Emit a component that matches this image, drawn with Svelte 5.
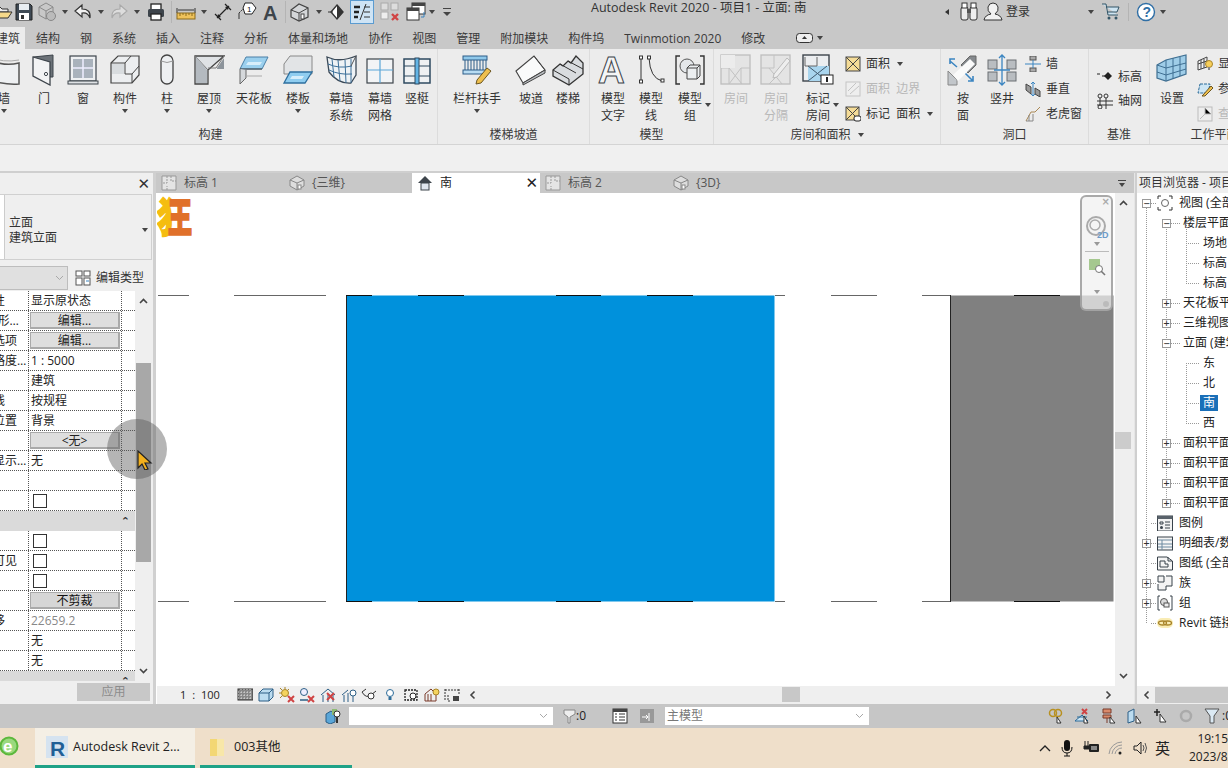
<script>
  const icons = {
    wall: '<path d="M1 5Q15 13 31 9V30Q16 31 1 26Z" fill="#eef0f2" stroke="#555" stroke-width="1.5"/><path d="M1 3Q15 9 31 6" stroke="#aaa" fill="none"/>',
    door: '<path d="M5 3 25 1V23H22" fill="#6c7278" stroke="#3d444b"/><path d="M5 3 22 8V31L5 22Z" fill="#f2f3f4" stroke="#3d444b" stroke-width="1.3"/><circle cx="18" cy="20" r="1.6" fill="#fff" stroke="#3d444b"/>',
    window: '<rect x="3" y="2" width="26" height="25" fill="#eef0f2" stroke="#3d444b" stroke-width="1.2"/><rect x="6" y="5" width="20" height="19" fill="#a9b2bc"/><path d="M16 5V24M6 14H26" stroke="#eef" stroke-width="1.5"/><rect x="1" y="27" width="30" height="3" fill="#dfe2e5" stroke="#3d444b"/>',
    component: '<path d="M2 9 9 2H30V21L23 29H2Z" fill="#eceef0" stroke="#444" stroke-width="1.2"/><path d="M2 9H16V20H23V29M16 9 22 2M23 20 30 12" fill="none" stroke="#444"/><path d="M3 10H15V20H3Z" fill="#d8dcdf"/>',
    column: '<rect x="10" y="1" width="12" height="29" rx="6" fill="#eef0f2" stroke="#444" stroke-width="1.3"/><path d="M10 7Q16 10 22 7" fill="none" stroke="#999"/>',
    roof: '<path d="M2 2H31L15 16V30H2Z" fill="#dfe2e5" stroke="#444" stroke-width="1.3"/><path d="M2 2 15 16M31 2 23 14H15" fill="none" stroke="#777"/><path d="M3 3 14 16V29H3Z" fill="#b4bac0"/><path d="M24 15H31V4L24 14Z" fill="#8d949b"/>',
    ceiling: '<path d="M8 3H30L24 15H2Z" fill="#9bd0ee" stroke="#4a7fa6"/><path d="M10 8H24L22 11H8Z" fill="#d8eefa"/><path d="M2 15H24" stroke="#444"/><path d="M2 15V30L8 24V16" fill="#d5d8db" stroke="#666"/><path d="M8 22H24" stroke="#aaa"/>',
    floor: '<path d="M8 2H30V20H2V10Z" fill="#e2e4e6" stroke="#888"/><path d="M8 18H30L23 29H2Z" fill="#8fcdf0" stroke="#2e6f9e" stroke-width="1.3"/><path d="M10 22H22L20 25H8Z" fill="#d6eefb"/>',
    cwsys: '<path d="M2 3Q15 9 31 2V21L26 29Q13 30 4 18Z" fill="#eef2f5" stroke="#3c4a58" stroke-width="1.3"/><path d="M7 5 9 23M13 6 15 27M20 6 21 29M26 5V29M3 10Q14 15 27 12M4 16Q14 21 27 20" stroke="#3b6f99" fill="none"/><path d="M26 12 31 2" stroke="#555"/>',
    cwgrid: '<rect x="3" y="5" width="26" height="24" fill="#f2f4f6" stroke="#3d444b" stroke-width="1.2"/><path d="M3 16H29M16 5V29" stroke="#5aa6d8" stroke-width="1.2"/>',
    mullion: '<rect x="3" y="5" width="26" height="24" fill="#eef1f3" stroke="#2e4a60" stroke-width="1.5"/><path d="M3 12H29M3 22H29" stroke="#2e4a60" stroke-width="1.2"/><rect x="14" y="4" width="4" height="26" fill="#63b5e6" stroke="#2e4a60"/>',
    railing: '<rect x="2" y="2" width="24" height="4" fill="#8fc8ea" stroke="#2c5d88"/><path d="M4 6V17M7 6V17M10 6V17M13 6V17M16 6V17M19 6V17M22 6V17M25 6V17" stroke="#2c5d88"/><rect x="2" y="16" width="24" height="4" fill="#b8dcf2" stroke="#2c5d88"/><path d="M16 26 26 14 30 17 20 29 15 30Z" fill="#eebf4e" stroke="#6b5620"/>',
    ramp: '<path d="M1 17 19 2 30 16 8 29Z" fill="#fafbfb" stroke="#444" stroke-width="1.1"/><path d="M8 29 30 16 30 19 8 31Z" fill="#b8bcc0" stroke="#444"/><path d="M19 2 30 16" stroke="#444"/>',
    stair: '<path d="M1 16 8 10 11 12 16 7 19 9 24 2 31 9V20L17 31 1 22Z" fill="#d9dcdf" stroke="#333" stroke-width="1.3"/><path d="M1 16 17 25M8 10 24 19M16 7 31 15M17 25V31" stroke="#333" fill="none"/>',
    modeltext: '<text x="1" y="29" font-family="Liberation Sans" font-weight="700" font-size="37" fill="#f4f5f6" stroke="#3d444b" stroke-width="1">A</text>',
    modelline: '<path d="M6 4V28" stroke="#333"/><path d="M14 4Q15 24 27 27" stroke="#333" fill="none"/><g fill="#fff" stroke="#333"><rect x="4.500" y="2" width="3" height="3"/><rect x="4.500" y="26" width="3" height="3"/><rect x="12.500" y="2" width="3" height="3"/><rect x="26" y="25" width="3" height="3"/></g>',
    modelgroup: '<path d="M6 2H2V30H6M26 2H30V30H26" fill="none" stroke="#333" stroke-width="1.4"/><circle cx="13" cy="12" r="7" fill="#e4e7ea" stroke="#555"/><path d="M13 14 16 11H26V22L23 25H13Z" fill="#eceff1" stroke="#444"/><path d="M13 14H23V25M23 14 26 11" fill="none" stroke="#444"/>',
    room: '<rect x="1" y="1" width="29" height="29" fill="#e4e4e4" stroke="#bdbdbd" stroke-width="1.3"/><path d="M1 14H9L22 30M30 14H21L9 30M9 14V30M21 14V30" fill="none" stroke="#c2c2c2"/><path d="M1 1H15V14H1Z" fill="#ececec"/>',
    roomsep: '<rect x="1" y="1" width="29" height="29" fill="#e4e4e4" stroke="#bdbdbd" stroke-width="1.3"/><path d="M14 1V14H1M9 14 22 30M21 18 9 30" fill="none" stroke="#c2c2c2"/><path d="M14 20 27 4 30 7 17 23 13 24Z" fill="#eee" stroke="#bbb"/>',
    tagroom: '<rect x="1" y="1" width="26" height="26" fill="#eceef0" stroke="#3d444b" stroke-width="1.4"/><path d="M6 12H27V27H6Z" fill="#a9d5ee"/><path d="M6 12 25 27M25 12 6 27" stroke="#40586c"/><path d="M3 3V12H15V3" fill="none" stroke="#666"/><rect x="19" y="21" width="12" height="9" fill="#fff" stroke="#222"/><rect x="24" y="23" width="2" height="5" fill="#222"/>',
    byface: '<path d="M1 17 10 26 V31H1Z" fill="#c2c6ca" stroke="#888"/><path d="M23 2H29V11L21 19 14 11Z" fill="#85898d" stroke="#666"/><path d="M3 7 10 13M3 10V5H8M26 27 18 19M26 22V27H21" stroke="#3b85c1" stroke-width="1.6" fill="none"/><path d="M6 21 23 5 28 10 11 27Z" fill="#fafafa"/>',
    shaft: '<g fill="#b9bdc1" stroke="#6a6e72"><rect x="2" y="6" width="9" height="9"/><rect x="21" y="6" width="9" height="9"/><rect x="2" y="18" width="9" height="9"/><rect x="21" y="18" width="9" height="9"/></g><path d="M16 1V31M13 4 16 1 19 4M13 28 16 31 19 28M8 16H24" stroke="#3b85c1" stroke-width="1.3" fill="none"/>',
    setwp: '<path d="M1 11 10 6 30 1V20L10 27 1 24Z" fill="#9fcde8" stroke="#3f6f92" stroke-width="1.2"/><path d="M10 6V27M1 11 10 14 30 9M1 18 10 21 30 15M17 4V25M24 3V22" fill="none" stroke="#3f6f92"/>',
    area: '<rect x="1" y="1" width="14" height="14" fill="#f5dc97" stroke="#444"/><path d="M1 1 15 15M15 1 1 15" stroke="#444"/>',
    areadis: '<rect x="1" y="1" width="14" height="14" fill="#eee" stroke="#c4c4c4"/><path d="M3 10 11 2M5 13 14 5" stroke="#c4c4c4"/>',
    tagarea: '<rect x="1" y="1" width="13" height="13" fill="#f5dc97" stroke="#444"/><path d="M1 1 14 14M14 1 1 14" stroke="#444"/><rect x="9" y="10" width="7" height="5" rx="2" fill="#fff" stroke="#222"/>',
    wallop: '<rect x="5" y="0" width="6" height="4" fill="#aaa" stroke="#555"/><rect x="5" y="12" width="6" height="4" fill="#aaa" stroke="#555"/><path d="M0 8H16M8 4V12" stroke="#3b85c1"/>',
    vert: '<path d="M1 3 6 6V13L1 9Z" fill="#999" stroke="#444"/><path d="M10 7 15 10V16L10 13Z" fill="#999" stroke="#444"/><path d="M8 1V15M6 3 8 1 10 3M6 13 8 15 10 13" stroke="#3b85c1" fill="none"/>',
    dormer: '<path d="M1 15 6 6H10L15 1" fill="none" stroke="#a85"/><path d="M4 15V9M1 15H8V8" fill="none" stroke="#888"/>',
    level: '<path d="M0 5H3M5 7H8" stroke="#222"/><path d="M11 3 15 7 11 11 7 7Z" fill="#222"/>',
    grid: '<circle cx="3" cy="3" r="2" fill="none" stroke="#333"/><circle cx="9" cy="3" r="2" fill="none" stroke="#333"/><circle cx="3" cy="14" r="2" fill="none" stroke="#333"/><path d="M3 5V12M9 5V16M0 8H16M0 12H16" stroke="#333"/>',
    showwp: '<path d="M1 5 10 1V11L1 14Z" fill="#f1f1f1" stroke="#444"/><path d="M4 4V13M7 3V12M1 8 10 5" stroke="#444"/><circle cx="12" cy="8" r="3.500" fill="#f7cf5a" stroke="#a8842a"/><rect x="11" y="11" width="2" height="3" fill="#888"/>',
    refplane: '<path d="M3 3H13L11 12H1Z" fill="#cde6f5" stroke="#2d6c9a" stroke-dasharray="3 1"/><path d="M6 14 14 5 16 7 8 15H5Z" fill="#eebf4e" stroke="#6b5620"/>',
    viewer: '<rect x="1" y="1" width="14" height="14" fill="#eee" stroke="#bbb"/><path d="M8 2V8H14M8 8 3 13" stroke="#bbb"/>',
    open: '<path d="M1 5H7L9 7H15V10H5L2 16H1Z" fill="#eee" stroke="#333"/><path d="M5 10H19L15 16H2Z" fill="#f6d98a" stroke="#333"/>',
    save: '<path d="M2 2H16L18 4V18H2Z" fill="#3f4a55" stroke="#222"/><rect x="5" y="2" width="10" height="6" fill="#e8edf1"/><rect x="5" y="11" width="10" height="7" fill="#fff"/><rect x="7" y="13" width="3" height="4" fill="#333"/>',
    sync: '<path d="M2 5 9 1 16 5V13L9 17 2 13Z" fill="#c8c8c8" stroke="#8a8a8a"/><path d="M2 5 9 9 16 5M9 9V17" stroke="#8a8a8a" fill="none"/><circle cx="14" cy="14" r="4.500" fill="#bbb" stroke="#888"/>',
    undo: '<path d="M9 3 2 9 9 15V11Q15 10 17 16 18 7 9 7Z" fill="#f1f1f1" stroke="#333" stroke-width="1.2"/>',
    redo: '<path d="M11 3 18 9 11 15V11Q5 10 3 16 2 7 11 7Z" fill="#ddd" stroke="#aaa" stroke-width="1.1"/>',
    print: '<rect x="5" y="2" width="10" height="6" fill="#fff" stroke="#222" stroke-width="1.3"/><rect x="2" y="7" width="16" height="8" rx="1.500" fill="#3d444b"/><rect x="5" y="12" width="10" height="6" fill="#fff" stroke="#222" stroke-width="1.3"/>',
    measure: '<path d="M1 6V11M19 6V11M2 8H18" stroke="#333"/><rect x="1" y="11" width="18" height="6" fill="#eec25b" stroke="#8a6a1c"/><path d="M4 11V14M7 11V13M10 11V14M13 11V13M16 11V14" stroke="#8a6a1c"/>',
    aligned: '<path d="M4 16 16 4M2 12 8 18M12 2 18 8" stroke="#222" stroke-width="1.2" fill="none"/><path d="M4 16 5 12 8 15ZM16 4 12 5 15 8Z" fill="#222"/>',
    tagq: '<path d="M2 17V11" stroke="#333"/><path d="M2 11 8 5" stroke="#333" stroke-dasharray="2 1"/><path d="M8 1H15L19 6 15 12H8L6 6Z" fill="#fff" stroke="#222"/><text x="10" y="10" font-size="8" font-family="Liberation Sans" fill="#111">1</text>',
    big_a: '<text x="2" y="18" font-family="Liberation Sans" font-weight="700" font-size="20" fill="#3d444b">A</text>',
    house: '<path d="M1 8 9 2 18 6V15L9 19 1 15Z" fill="#d4d6d8" stroke="#444" stroke-width="1.2"/><path d="M1 8 9 11 18 6M9 11V19" stroke="#444" fill="none"/><rect x="11" y="12" width="3" height="5" fill="#fff" stroke="#444"/>',
    section: '<path d="M10 3 16 10 10 17 4 10Z" fill="#fff" stroke="#333" stroke-width="1.4"/><path d="M10 3 16 10 10 17Z" fill="#333"/><path d="M1 10H6" stroke="#333"/>',
    thin: '<rect x="0.500" y="0.500" width="23" height="23" fill="#cfe4f5" stroke="#5b9bd0"/><path d="M4 7H10M4 12H9M4 17H8" stroke="#222" stroke-width="2.400"/><path d="M14 7H20M14 12H20M14 17H20M16 4 10 20" stroke="#333"/>',
    closeh: '<rect x="1" y="1" width="7" height="7" fill="#ddd" stroke="#aaa"/><rect x="11" y="1" width="7" height="7" fill="#ddd" stroke="#aaa"/><rect x="1" y="10" width="7" height="7" fill="#eee" stroke="#aaa"/><path d="M12 12 18 18M18 12 12 18" stroke="#d04444" stroke-width="2.400"/>',
    switchw: '<rect x="6" y="1" width="13" height="11" fill="#fff" stroke="#333"/><rect x="6" y="1" width="13" height="3" fill="#444"/><rect x="1" y="6" width="12" height="12" fill="#fff" stroke="#333"/><rect x="1" y="6" width="12" height="3" fill="#444"/><path d="M15 15H18V10" fill="none" stroke="#3b85c1"/>',
    bino: '<rect x="2" y="5" width="7" height="13" rx="2" fill="#eee" stroke="#333"/><rect x="11" y="5" width="7" height="13" rx="2" fill="#eee" stroke="#333"/><rect x="3" y="1" width="5" height="5" fill="#fff" stroke="#333"/><rect x="12" y="1" width="5" height="5" fill="#fff" stroke="#333"/><rect x="8" y="7" width="4" height="4" fill="#555"/>',
    user: '<path d="M1 18Q2 13 8 12 4 9 5 5 6 1 10 1 14 1 15 5 16 9 12 12 18 13 19 18Z" fill="#f2f2f2" stroke="#333"/>',
    cart: '<path d="M1 2H5L7 13H17M5 5H18L16 10H6" fill="#cfe5f2" stroke="#356"/><circle cx="8" cy="16" r="1.500" fill="#356"/><circle cx="15" cy="16" r="1.500" fill="#356"/>',
    help: '<circle cx="10" cy="10" r="8.500" fill="#fff" stroke="#2f6ea5" stroke-width="1.400"/><text x="6.500" y="15" font-size="14" font-weight="700" font-family="Liberation Sans" fill="#2f6ea5">?</text>',
    plan: '<path d="M1 1H15V15H1Z" fill="#e4e4e4" stroke="#999"/><path d="M10 1V6H15M6 1V8H1M6 15V11" stroke="#999" fill="none" stroke-dasharray="2 1"/>',
    view3d: '<path d="M1 5 8 1 15 5V11L8 15 1 11Z" fill="#ddd" stroke="#888"/><path d="M1 5 8 8 15 5M8 8V15" stroke="#888" fill="none"/><rect x="9" y="10" width="3" height="4" fill="#fff" stroke="#888"/>',
    elev: '<path d="M8 1 15 8H1Z" fill="#3d444b"/><rect x="4" y="8" width="8" height="7" fill="#dfe6ee" stroke="#3d444b"/>',
    editType: '<rect x="1" y="1" width="6" height="5" fill="#fff" stroke="#555"/><rect x="1" y="8" width="6" height="7" fill="#fff" stroke="#555"/><rect x="9" y="1" width="6" height="5" fill="#fff" stroke="#555"/><rect x="9" y="8" width="6" height="7" fill="#fff" stroke="#555"/><path d="M11 11H14" stroke="#3b85c1"/>',
    treeviews: '<path d="M1 4V1H4M12 1H15V4M1 12V15H4M12 15H15V12" fill="none" stroke="#333"/><circle cx="8" cy="8" r="3.500" fill="#fff" stroke="#666"/>',
    legend: '<rect x="0.500" y="1" width="15" height="15" fill="#f1f1f1" stroke="#39424b"/><rect x="0.500" y="1" width="15" height="3" fill="#59626b"/><path d="M3 7H6V9H3ZM8 7H13M8 10H13M8 13H13" stroke="#39424b" fill="none"/><circle cx="4.500" cy="12.500" r="1.500" fill="#39424b"/>',
    sched: '<rect x="0.500" y="2" width="15" height="13" fill="#f4f4f4" stroke="#39424b"/><path d="M1 5H15M1 9H15M1 12H15M5 5V15" stroke="#6d8aa0"/>',
    sheet: '<path d="M0.500 2H10L15.500 6V15H0.500Z" fill="#f4f4f4" stroke="#39424b"/><path d="M3 12V6H8V9H11V12ZM11 2V6H15" fill="none" stroke="#39424b"/>',
    family: '<path d="M1 1H7V7H1ZM9 1H15V11H9V15H1V9" fill="#f4f4f4" stroke="#39424b"/>',
    group: '<path d="M3 1H1V15H3M13 1H15V15H13" fill="none" stroke="#39424b"/><circle cx="7" cy="7" r="3.500" fill="#ddd" stroke="#555"/><rect x="7" y="8" width="5" height="4" fill="#eee" stroke="#555"/>',
    link: '<rect x="0" y="3" width="16" height="10" rx="5" fill="#f9ecb4"/><ellipse cx="5.500" cy="8" rx="4" ry="2" fill="none" stroke="#a8842a" stroke-width="1.300"/><ellipse cx="10.500" cy="8" rx="4" ry="2" fill="none" stroke="#a8842a" stroke-width="1.300"/>',
    vDetail: '<rect x="1" y="2" width="15" height="11" fill="#888" stroke="#333"/><path d="M1 5H16M1 8H16M1 11H16M4 2V13M7 2V13M10 2V13M13 2V13" stroke="#ddd" stroke-dasharray="1 2"/>',
    vCube: '<path d="M1 6 5 2H15V10L11 14H1Z" fill="#bcdcf0" stroke="#2d5f86"/><path d="M1 6H11V14M11 6 15 2" fill="none" stroke="#2d5f86"/>',
    vSun: '<circle cx="6" cy="6" r="3.500" fill="#f4d35e" stroke="#a8842a"/><path d="M6 0V2M0 6H2M1 1 3 3M10 2 8.500 3.500M1 11 3 9" stroke="#a8842a"/><path d="M9 9 15 15M15 9 9 15" stroke="#d04444" stroke-width="2"/>',
    vShadow: '<circle cx="5" cy="5" r="3.500" fill="#eef" stroke="#2d5f86"/><path d="M1 13H9" stroke="#2d5f86" stroke-width="1.500"/><path d="M9 9 15 15M15 9 9 15" stroke="#d04444" stroke-width="2"/>',
    vRender: '<path d="M1 8 8 2 15 8M3 8V15M8 8V15M13 8V15" stroke="#2d5f86" fill="none"/><path d="M7 6 14 13M14 6 7 13" stroke="#d04444" stroke-width="2"/>',
    vCrop: '<path d="M1 8 7 3M3 8V15M7 6V15" stroke="#2d5f86" fill="none"/><circle cx="12" cy="6" r="3" fill="#fff" stroke="#2d5f86"/><path d="M12 9V15" stroke="#2d5f86"/>',
    vGlass: '<path d="M1 5Q5 12 10 8L15 4M1 5 5 2" fill="none" stroke="#333"/><circle cx="10" cy="9" r="3" fill="#fff" stroke="#333"/>',
    vBulb: '<circle cx="8" cy="6" r="3.500" fill="#fff" stroke="#2d6c9a"/><path d="M6.500 10H9.500V13H6.500Z" fill="#2d6c9a"/>',
    vHide: '<path d="M2 3H14V13H2Z" fill="none" stroke="#222" stroke-dasharray="2 1" stroke-width="1.300"/><circle cx="10" cy="9" r="3" fill="#fff" stroke="#222"/>',
    vTemp: '<path d="M1 7 7 2 12 7V14H1ZM4 7V14M7 7V14" fill="none" stroke="#7a3a2a"/><circle cx="12" cy="5" r="3" fill="#f4d35e" stroke="#a8842a"/>',
    vAnal: '<path d="M1 2V14M1 3H15M15 2V7M4 8V14H7" fill="none" stroke="#333" stroke-dasharray="2 1"/><rect x="9" y="9" width="6" height="5" fill="#444"/>',
    stWs: '<path d="M1 6 6 3 10 6V14L5 16 1 14Z" fill="#5aa6d8" stroke="#2d5f86"/><rect x="7" y="1" width="5" height="6" fill="#8dbb73"/><path d="M12 7V15" stroke="#333" stroke-width="2"/><circle cx="12" cy="6" r="3" fill="#fff" stroke="#333"/>',
    stFilter: '<path d="M2 2H13V6L8 9V15H6V9L2 6Z" fill="#eee" stroke="#888"/>',
    stList: '<rect x="1" y="1" width="14" height="14" fill="#fff" stroke="#333"/><rect x="1" y="1" width="14" height="3" fill="#444"/><path d="M3 6H5M7 6H13M3 9H5M7 9H13M3 12H5M7 12H13" stroke="#333"/>',
    stOpt: '<rect x="1" y="1" width="14" height="14" fill="#999"/><path d="M3 9H9M7 7 9 9 7 11M10 5V13" stroke="#fff" fill="none"/>',
    stLink: '<circle cx="5" cy="5" r="3.500" fill="none" stroke="#b89020" stroke-width="1.500"/><circle cx="10" cy="5" r="3.500" fill="none" stroke="#b89020" stroke-width="1.500"/><path d="M9 9 13 15H9Z" fill="#fff" stroke="#333"/>',
    stUnder: '<path d="M1 13 8 7 14 13ZM3 9H13" fill="#cde6f5" stroke="#2d6c9a"/><path d="M8 1 13 6M13 1 8 6" stroke="#d04444" stroke-width="2"/><path d="M10 8 14 15H10Z" fill="#fff" stroke="#333"/>',
    stPin: '<path d="M3 1H11V5H3ZM3 7H11V10H3ZM7 10V15" fill="#d98a6a" stroke="#7a3a2a"/><path d="M10 9 15 15H10Z" fill="#fff" stroke="#333"/>',
    stFace: '<path d="M2 4 8 1V13L2 15Z" fill="#bcdcf0" stroke="#2d5f86"/><path d="M10 8 15 15H10Z" fill="#fff" stroke="#333"/>',
    stDrag: '<path d="M5 1V8M2 4H8" stroke="#222" stroke-width="1.500"/><path d="M8 6 14 14H8Z" fill="#fff" stroke="#333"/>',
    stGear: '<circle cx="8" cy="8" r="5" fill="none" stroke="#aaa" stroke-width="2.500"/>',
    stFunnel: '<path d="M1 1H15L10 8V15H6V8Z" fill="#dbe9f3" stroke="#555"/>',
    ie: '<circle cx="10" cy="10" r="8.500" fill="#9ad97e" stroke="#5cb83c" stroke-width="2"/><text x="4" y="16" font-size="17" font-weight="700" font-family="Liberation Sans" fill="#fff">e</text>',
    revit: '<rect x="0" y="0" width="22" height="22" fill="#d5e3f0"/><text x="4" y="20" font-size="21" font-weight="700" font-family="Liberation Sans" fill="#1f5f96">R</text>',
    folder: '<path d="M0 1H9L14 2V18H0Z" fill="#f3d774"/><path d="M7 1H14V18H7Z" fill="#f8e7a8"/>',
    mic: '<rect x="4" y="1" width="6" height="11" rx="3" fill="#111"/><path d="M2 8Q2 14 7 14 12 14 12 8M7 14V17M4 17H10" fill="none" stroke="#111"/>',
    power: '<path d="M2 1V6M5 1V6M1 6H6V9H1Z" stroke="#222" fill="#222"/><rect x="6" y="4" width="10" height="8" fill="#222" rx="1"/><rect x="8" y="6" width="6" height="4" fill="#888"/>',
    wifi: '<path d="M1 14A13 13 0 0 1 14 2M4 14A10 10 0 0 1 14 5M7 14A7 7 0 0 1 14 8" fill="none" stroke="#999"/><circle cx="12" cy="13" r="1.500" fill="#222"/>',
    sound: '<path d="M1 6H4L8 2V14L4 10H1Z" fill="none" stroke="#222"/><path d="M10 5Q12 8 10 11M12 3Q15 8 12 13" fill="none" stroke="#555"/>',
    cursor: '<path d="M1 1 1 18 5 14 8 20 11 19 8 13 14 13Z" fill="#f2b01e" stroke="#222" stroke-width="1.200"/>'
  };

  const qat = [
    ['open', 20], ['save', 22], ['sync', 24], ['a', 12], ['undo', 24], ['a', 12], ['redo', 24], ['a', 12],
    ['print', 26], ['s', 4], ['measure', 25], ['a', 12], ['aligned', 25], ['tagq', 24], ['big_a', 24], ['s', 4],
    ['house', 26], ['a', 12], ['section', 24], ['thin', 26], ['closeh', 30], ['switchw', 22], ['a', 10], ['c', 20]
  ];

  const tabs = ['建筑', '结构', '钢', '系统', '插入', '注释', '分析', '体量和场地', '协作', '视图', '管理', '附加模块', '构件坞', 'Twinmotion 2020', '修改'];

  const panels = [
    { title: '构建', w: 454, items: [
      { i: 'wall', l: ['墙'], w: 40, a: 1 }, { i: 'door', l: ['门'], w: 40 }, { i: 'window', l: ['窗'], w: 38 },
      { i: 'component', l: ['构件'], w: 46, a: 1 }, { i: 'column', l: ['柱'], w: 38, a: 1 }, { i: 'roof', l: ['屋顶'], w: 46, a: 1 },
      { i: 'ceiling', l: ['天花板'], w: 44 }, { i: 'floor', l: ['楼板'], w: 44, a: 1 }, { i: 'cwsys', l: ['幕墙', '系统'], w: 42 },
      { i: 'cwgrid', l: ['幕墙', '网格'], w: 36 }, { i: 'mullion', l: ['竖梃'], w: 38 } ] },
    { title: '楼梯坡道', w: 152, items: [
      { i: 'railing', l: ['栏杆扶手'], w: 78, a: 1 }, { i: 'ramp', l: ['坡道'], w: 30 }, { i: 'stair', l: ['楼梯'], w: 44 } ] },
    { title: '模型', w: 124, items: [
      { i: 'modeltext', l: ['模型', '文字'], w: 46 }, { i: 'modelline', l: ['模型', '线'], w: 30 }, { i: 'modelgroup', l: ['模型', '组'], w: 48, side: 1 } ] },
    { title: '房间和面积', more: 1, w: 227, items: [
      { i: 'room', l: ['房间'], w: 44, dis: 1 }, { i: 'roomsep', l: ['房间', '分隔'], w: 36, dis: 1 }, { i: 'tagroom', l: ['标记', '房间'], w: 48, side: 1 } ],
      small: { w: 99, pl: 3, rows: [ { i: 'area', t: '面积', a: 1 }, { i: 'areadis', t: '面积  边界', dis: 1 }, { i: 'tagarea', t: '标记  面积', a: 1 } ] } },
    { title: '洞口', w: 148, items: [ { i: 'byface', l: ['按', '面'], w: 44 }, { i: 'shaft', l: ['竖井'], w: 34 } ],
      small: { w: 70, pl: 6, rows: [ { i: 'wallop', t: '墙' }, { i: 'vert', t: '垂直' }, { i: 'dormer', t: '老虎窗' } ] } },
    { title: '基准', w: 61, items: [],
      small: { w: 61, pl: 8, tight: 1, rows: [ { i: 'level', t: '标高' }, { i: 'grid', t: '轴网' } ] } },
    { title: '工作平面', w: 130, items: [ { i: 'setwp', l: ['设置'], w: 44 } ],
      small: { w: 86, pl: 3, rows: [ { i: 'showwp', t: '显示' }, { i: 'refplane', t: '参照' }, { i: 'viewer', t: '查看器', dis: 1 } ] } }
  ];

  const docTabs = [
    { i: 'plan', t: '标高 1' }, { i: 'view3d', t: '{三维}' }, { i: 'elev', t: '南', on: 1 },
    { i: 'plan', t: '标高 2' }, { i: 'view3d', t: '{3D}' }
  ];

  const props = [
    ['零件可见性', '显示原状态'], ['可见性/图形替换', '编辑...', 'btn'], ['图形显示选项', '编辑...', 'btn'],
    ['当比例粗略度超过下列值时', '1 : 5000'], ['规程', '建筑'], ['显示隐藏线', '按规程'], ['颜色方案位置', '背景'],
    ['颜色方案', '<无>', 'btn'], ['默认分析显示样式', '无'], ['参照', ''], ['日光路径', '', 'chk'],
    ['范围', '', 'head'], ['裁剪视图', '', 'chk'], ['裁剪区域可见', '', 'chk'], ['注释裁剪', '', 'chk'],
    ['远剪裁', '不剪裁', 'btn dark'], ['远剪裁偏移', '22659.2', 'grey'], ['范围框', '无'], ['相关标高', '无'], ['标识数据', '', 'head']
  ];

  const tree = [
    { l: 0, b: '-', i: 'treeviews', t: '视图 (全部)' }, { l: 1, b: '-', t: '楼层平面' }, { l: 2, t: '场地' }, { l: 2, t: '标高 1' }, { l: 2, t: '标高 2' },
    { l: 1, b: '+', t: '天花板平面' }, { l: 1, b: '+', t: '三维视图' }, { l: 1, b: '-', t: '立面 (建筑立面)' },
    { l: 2, t: '东' }, { l: 2, t: '北' }, { l: 2, t: '南', on: 1 }, { l: 2, t: '西' },
    { l: 1, b: '+', t: '面积平面 (人防)' }, { l: 1, b: '+', t: '面积平面 (净面积)' }, { l: 1, b: '+', t: '面积平面 (总建筑)' }, { l: 1, b: '+', t: '面积平面 (防火)' },
    { l: 0, i: 'legend', t: '图例' }, { l: 0, b: '+', i: 'sched', t: '明细表/数量 (全部)' }, { l: 0, i: 'sheet', t: '图纸 (全部)' },
    { l: 0, b: '+', i: 'family', t: '族' }, { l: 0, b: '+', i: 'group', t: '组' }, { l: 0, i: 'link', t: 'Revit 链接' }
  ];

  // connector stubs of the project tree, one per row: [from x, to x]
  const stubs = [[14, 19], [34, 44], [49, 62]];

  const viewIcons = ['vDetail', 'vCube', 'vSun', 'vShadow', 'vRender', 'vCrop', 'vGlass', 'vBulb', 'vHide', 'vTemp', 'vAnal'];
  const selectIcons = ['stLink', 'stUnder', 'stPin', 'stFace', 'stDrag', 'stGear', 'stFunnel'];

  // elevation outline: [x1, x2] with canvas origin at 157,193
  const thinLines = [[1, 32], [77, 169], [618, 628], [674, 720], [765, 793]];
  const darkLines = [[189, 215], [261, 307], [399, 444], [490, 536], [857, 903]];
</script>

{#snippet ico(name, s, h = s)}
  <svg class="ico" width={s} height={h} viewBox="0 0 {s} {h}">{@html icons[name]}</svg>
{/snippet}

{#snippet chev(dir = 'down')}
  <svg class="chev {dir}" width="9" height="6" viewBox="0 0 9 6"><path d="M1 1 4.500 4.500 8 1" fill="none" stroke="#444" stroke-width="1.600"/></svg>
{/snippet}

<div class="app">
  <header class="top">
    <div class="qrow">
      <div class="qat">
        {#each qat as [n, w]}
          <span class="qslot" style="width:{w}px">
            {#if n === 'a'}<i class="tri"></i>
            {:else if n === 's'}<i class="qsep"></i>
            {:else if n === 'c'}<span class="cust"><i class="tri wide"></i></span>
            {:else if n === 'thin'}{@render ico(n, 24)}
            {:else}{@render ico(n, 20)}{/if}
          </span>
        {/each}
      </div>
      <div class="title">Autodesk Revit 2020 - 项目1 - 立面: 南</div>
      <div class="account">
        <i class="tri left"></i>
        {@render ico('bino', 20)}
        {@render ico('user', 20)}
        <span class="login">登录</span>
        <i class="tri acc-arrow"></i>
        {@render ico('cart', 20)}
        <i class="qsep"></i>
        {@render ico('help', 20)}
        <i class="tri"></i>
      </div>
    </div>
    <nav class="tabs">
      {#each tabs as t, i}
        <span class="tab" class:on={i === 0}>{t}</span>
      {/each}
      <span class="tabmode"><svg width="17" height="10" viewBox="0 0 17 10"><rect x="0.500" y="0.500" width="16" height="9" rx="3" fill="#eee" stroke="#333"/><path d="M6 6H11L8.500 3Z" fill="#333"/></svg><i class="tri"></i></span>
    </nav>
  </header>

  <section class="ribbon">
    {#each panels as p}
      <div class="panel" style="width:{p.w}px">
        <div class="pbody">
          {#each p.items as b}
            <div class="big" class:dis={b.dis} class:side={b.side} style="width:{b.w}px">
              {@render ico(b.i, 32)}
              <div class="lbl">
                {#each b.l as line}<div>{line}</div>{/each}
              </div>
              {#if b.a}<i class="tri"></i>{/if}
              {#if b.side}<i class="tri sidetri"></i>{/if}
            </div>
          {/each}
          {#if p.small}
            <div class="smallcol" class:tight={p.small.tight} style="width:{p.small.w}px;padding-left:{p.small.pl}px">
              {#each p.small.rows as r}
                <div class="srow" class:dis={r.dis}>
                  {@render ico(r.i, 16)}
                  <span>{r.t}</span>
                  {#if r.a}<i class="tri"></i>{/if}
                </div>
              {/each}
            </div>
          {/if}
        </div>
        <div class="ptitle">{p.title}{#if p.more}<i class="tri more"></i>{/if}</div>
      </div>
    {/each}
  </section>

  <div class="band"></div>

  <main class="main">
    <aside class="props">
      <div class="phead"><span class="x">✕</span></div>
      <div class="selector">
        <div class="thumb"></div>
        <div class="seltext"><div>立面</div><div>建筑立面</div></div>
        <i class="tri"></i>
      </div>
      <div class="typerow">
        <div class="typesel">{@render chev()}</div>
        {@render ico('editType', 16)}
        <span>编辑类型</span>
      </div>
      <div class="pscroll">
        <div class="ptable">
          {#each props as [k, v, kind]}
            {#if kind === 'head'}
              <div class="phdr"><span>{k}</span><b>⌃</b></div>
            {:else}
              <div class="prow">
                <div class="pk">{k}</div>
                <div class="pv {kind || ''}">
                  {#if kind === 'chk'}<i class="box"></i>
                  {:else if kind && kind.startsWith('btn')}<span class="pbtn" class:dark={kind.includes('dark')}>{v}</span>
                  {:else}{v}{/if}
                </div>
                <div class="pe"></div>
              </div>
            {/if}
          {/each}
        </div>
        <div class="pbar">
          <span class="arrow">{@render chev('up')}</span>
          <div class="ptrack"><div class="pthumb"></div></div>
          <span class="arrow">{@render chev()}</span>
        </div>
      </div>
      <div class="applyrow"><span class="apply">应用</span></div>
    </aside>
    <div class="split"></div>

    <div class="viewarea">
      <div class="doctabs">
        {#each docTabs as d}
          <div class="dtab" class:on={d.on}>
            {@render ico(d.i, 16)}
            <span>{d.t}</span>
            {#if d.on}<b class="dx">✕</b>{/if}
          </div>
        {/each}
        <span class="dmenu"><i class="bar"></i><i class="tri"></i></span>
      </div>
      <div class="viewmid">
        <div class="canvas">
          <svg class="drawing" width="958" height="492" viewBox="0 0 958 492">
            <rect x="189.500" y="102.500" width="428" height="306" fill="#0091dc"/>
            <rect x="793.500" y="102.500" width="163" height="306" fill="#808080"/>
            <path d="M189.500 102V409M793.500 102V409" stroke="#222"/>
            {#each [102.5, 408.5] as y}
              {#each thinLines as [a, b]}<line x1={a} x2={b} y1={y} y2={y} stroke="#666"/>{/each}
              {#each darkLines as [a, b]}<line x1={a} x2={b} y1={y} y2={y} stroke="#111"/>{/each}
            {/each}
          </svg>
          <div class="logo"><span class="lg-a">犭</span><span class="lg-b">王</span></div>
          <div class="navbar">
            <span class="navclose">×</span>
            <svg width="26" height="26" viewBox="0 0 26 26"><circle cx="12" cy="12" r="9" fill="#f4f4f4" stroke="#aaa" stroke-width="2"/><circle cx="11" cy="11" r="5" fill="none" stroke="#aaa" stroke-width="1.500"/><text x="13" y="24" font-size="9" font-weight="700" font-family="Liberation Sans" fill="#6c9bc8">2D</text></svg>
            <i class="tri grey"></i>
            <i class="navline"></i>
            <svg width="18" height="18" viewBox="0 0 18 18"><rect x="1" y="1" width="11" height="11" fill="#a5c88f"/><circle cx="11" cy="11" r="3.500" fill="#fff" stroke="#777"/><path d="M13 13 17 17" stroke="#777" stroke-width="1.600"/></svg>
            <i class="tri grey"></i>
            <span class="navgear"></span>
          </div>
        </div>
        <div class="vscroll">
          <span class="arrow">{@render chev('up')}</span>
          <div class="vtrack"><div class="vthumb"></div></div>
          <span class="arrow">{@render chev()}</span>
        </div>
      </div>
      <div class="viewbar">
        <span class="scale">1 : 100</span>
        <div class="vicons">
          {#each viewIcons as n}<span class="vi">{@render ico(n, 16)}</span>{/each}
          <span class="vi">{@render chev('left')}</span>
        </div>
        <div class="htrack"><div class="hthumb"></div></div>
        <span class="harrow">{@render chev('right')}</span>
        <span class="grip"></span>
      </div>
    </div>
    <div class="split right"></div>

    <aside class="browser">
      <div class="bhead">项目浏览器 - 项目1</div>
      <div class="tree">
        <svg class="guides" width="91" height="440" viewBox="0 0 91 440">
          <path d="M9.500 15V430M29.500 30V310M49.500 30V90M49.500 170V230" stroke="#999" stroke-dasharray="1 1" fill="none"/>
          {#each tree as r, i}
            <line x1={stubs[r.l][0]} x2={stubs[r.l][1]} y1={10.5 + i * 20} y2={10.5 + i * 20} stroke="#999" stroke-dasharray="1 1"/>
          {/each}
        </svg>
        {#each tree as r}
          <div class="trow lv{r.l}">
            {#if r.b}<span class="tbox">{r.b === '+' ? '+' : '−'}</span>{:else if r.l < 2}<span class="tbox none"></span>{/if}
            {#if r.i}<span class="ticon">{@render ico(r.i, 16)}</span>{/if}
            <span class="ttext" class:sel={r.on}>{r.t}</span>
          </div>
        {/each}
      </div>
      <div class="bscroll">
        <span class="harrow">{@render chev('left')}</span>
        <div class="bthumb"></div>
      </div>
    </aside>
  </main>

  <div class="status">
    <span class="st-ws">{@render ico('stWs', 16)}</span>
    <div class="combo">{@render chev()}</div>
    <span class="st-f">{@render ico('stFilter', 16)}</span>
    <span class="st-n">:0</span>
    <span class="st-l">{@render ico('stList', 16)}</span>
    <span class="st-o">{@render ico('stOpt', 16)}</span>
    <div class="combo model"><span>主模型</span>{@render chev()}</div>
    <div class="st-right">
      {#each selectIcons as n}{@render ico(n, 16)}{/each}
      <span class="st-z">:0</span>
    </div>
  </div>

  <footer class="taskbar">
    <span class="ie">{@render ico('ie', 20)}</span>
    <div class="task active">{@render ico('revit', 22)}<span>Autodesk Revit 2...</span></div>
    <div class="task folder">{@render ico('folder', 14, 18)}<span>003其他</span></div>
    <div class="tray">
      <svg width="12" height="8" viewBox="0 0 12 8"><path d="M1 7 6 2 11 7" fill="none" stroke="#222" stroke-width="1.300"/></svg>
      {@render ico('mic', 14, 18)}
      {@render ico('power', 16)}
      {@render ico('wifi', 16)}
      {@render ico('sound', 16)}
      <span class="ime">英</span>
      <div class="clock"><div>19:15</div><div>2023/8/15</div></div>
    </div>
  </footer>

  <div class="spot"></div>
  <span class="mouse">{@render ico('cursor', 20)}</span>
</div>

<style>
  :global(body) {
    margin: 0;
    overflow: hidden;
  }

  .app {
    position: relative;
    width: 1228px;
    height: 768px;
    overflow: hidden;
    display: flex;
    flex-direction: column;
    background: #efefef;
    color: #333;
    font: 12px/1.2 "Open Sans", "Noto Sans CJK SC", sans-serif;
  }

  .ico {
    display: block;
    flex-shrink: 0;
  }

  .tri {
    display: block;
    width: 0;
    height: 0;
    border: 3px solid transparent;
    border-top: 4px solid #444;
    border-bottom: 0;
    flex-shrink: 0;
  }

  .tri.wide {
    border-left-width: 4px;
    border-right-width: 4px;
  }

  .tri.grey {
    border-top-color: #999;
  }

  /* title bar + ribbon tabs */
  .top {
    height: 49px;
    flex-shrink: 0;
    background: #c8c8c8;
  }

  .qrow {
    height: 27px;
    display: flex;
    align-items: flex-start;
  }

  .qat {
    display: flex;
    align-items: center;
    margin-left: -7px;
    flex-shrink: 0;
  }

  .qslot {
    display: flex;
    justify-content: center;
    align-items: center;
    height: 24px;
  }

  .qsep {
    display: block;
    width: 1px;
    height: 22px;
    background: #b4b4b4;
  }

  .cust {
    display: block;
    padding-top: 3px;
    border-top: 1px solid #444;
  }

  .title {
    margin-left: 134px;
    color: #333;
    font-size: 12.500px;
    white-space: nowrap;
  }

  .account {
    margin-left: auto;
    width: 288px;
    height: 24px;
    flex-shrink: 0;
    box-sizing: border-box;
    padding: 0 0 0 5px;
    display: flex;
    align-items: center;
    gap: 4px;
  }

  .tri.left {
    border: 3px solid transparent;
    border-right: 4px solid #333;
    border-left: 0;
    margin-right: 6px;
  }

  .login {
    margin-left: -1px;
    font-size: 12px;
    white-space: nowrap;
  }

  .acc-arrow {
    margin-left: 54px;
    margin-right: 3px;
  }

  .account .qsep {
    height: 18px;
    margin: 0 3px;
  }

  .tabs {
    height: 22px;
    display: flex;
    align-items: stretch;
    margin-left: -14px;
  }

  .tab {
    padding: 0 10px;
    line-height: 24px;
    white-space: nowrap;
    color: #3a3a3a;
  }

  .tab.on {
    background: #ececec;
    padding-right: 5px;
    margin-right: 1px;
  }

  .tabmode {
    margin-left: 21px;
    display: flex;
    align-items: center;
    gap: 4px;
  }

  /* ribbon */
  .ribbon {
    height: 96px;
    flex-shrink: 0;
    display: flex;
    background: #ececec;
    border-bottom: 1px solid #d4d4d4;
    box-sizing: border-box;
    margin-left: -16px;
  }

  .panel {
    flex-shrink: 0;
    box-sizing: border-box;
    border-right: 1px solid #dcdcdc;
    display: flex;
    flex-direction: column;
    justify-content: space-between;
  }

  .pbody {
    display: flex;
    height: 77px;
  }

  .big {
    flex-shrink: 0;
    padding-top: 5px;
    display: flex;
    flex-direction: column;
    align-items: center;
    position: relative;
  }

  .lbl {
    margin-top: 4px;
    text-align: center;
    line-height: 17px;
    white-space: nowrap;
  }

  .big > .tri {
    margin-top: 2px;
  }

  .big > .sidetri {
    position: absolute;
    right: 3px;
    top: 54px;
    margin: 0;
  }

  .dis {
    color: #b8b8b8;
  }

  .smallcol {
    flex-shrink: 0;
    display: flex;
    flex-direction: column;
    gap: 9px;
    padding-top: 7px;
    box-sizing: border-box;
  }

  .smallcol.tight {
    padding-top: 20px;
    gap: 8px;
  }

  .srow {
    display: flex;
    align-items: center;
    gap: 5px;
    height: 16px;
    white-space: pre;
  }

  .srow .tri {
    margin-left: 2px;
  }

  .ptitle {
    height: 18px;
    display: flex;
    justify-content: center;
    align-items: center;
    gap: 7px;
    color: #3a3a3a;
  }

  .band {
    height: 26px;
    flex-shrink: 0;
    background: #f0f0f0;
  }

  /* main */
  .main {
    height: 533px;
    flex-shrink: 0;
    display: flex;
    border-top: 2px solid #cfcfcf;
    box-sizing: border-box;
  }

  .props {
    width: 153px;
    flex-shrink: 0;
    display: flex;
    flex-direction: column;
    background: #efefef;
  }

  .phead {
    height: 21px;
    display: flex;
    justify-content: flex-end;
    align-items: center;
    padding-right: 3px;
  }

  .x {
    font: 700 15px "DejaVu Sans", sans-serif;
    color: #333;
  }

  .selector {
    height: 66px;
    margin-right: 1px;
    display: flex;
    align-items: center;
    border: 1px solid #d0d0d0;
    border-left: 0;
    box-sizing: border-box;
    position: relative;
  }

  .thumb {
    width: 4px;
    height: 64px;
    background: #fff;
    border-right: 1px solid #ccc;
    flex-shrink: 0;
  }

  .seltext {
    margin-left: 4px;
    margin-top: 6px;
    line-height: 15px;
  }

  .selector .tri {
    position: absolute;
    right: 3px;
    top: 33px;
  }

  .typerow {
    margin-top: 6px;
    height: 24px;
    display: flex;
    align-items: center;
    gap: 5px;
  }

  .typesel {
    width: 68px;
    height: 24px;
    background: #e0e0e0;
    border: 1px solid #bdbdbd;
    border-left: 0;
    box-sizing: border-box;
    display: flex;
    justify-content: flex-end;
    align-items: center;
    padding-right: 3px;
    margin-right: 2px;
  }

  .typesel .chev path,
  .combo .chev path {
    stroke: #a8a8a8;
    stroke-width: 1;
  }

  .pscroll {
    height: 390px;
    margin-top: 1px;
    display: flex;
    overflow: hidden;
  }

  .ptable {
    width: 190px;
    margin-left: -55px;
    flex-shrink: 0;
    background: #fff;
    overflow: hidden;
  }

  .prow {
    display: grid;
    grid-template-columns: 84px 93px 13px;
    height: 20px;
    box-sizing: border-box;
    border-bottom: 1px dotted #555;
  }

  .pk {
    line-height: 19px;
    white-space: nowrap;
    overflow: hidden;
    text-overflow: ellipsis;
    border-right: 1px dotted #555;
    color: #222;
  }

  .pv {
    line-height: 19px;
    padding-left: 2px;
    border-right: 1px dotted #555;
    color: #222;
    white-space: nowrap;
    font-size: 12px;
  }

  .pv.grey {
    color: #888;
  }

  .pv.btn,
  .pv.btn.dark {
    padding: 1px;
  }

  .pbtn {
    display: block;
    height: 17px;
    line-height: 15px;
    box-sizing: border-box;
    text-align: center;
    background: #dedede;
    border: 1px solid #aaa;
    border-right-width: 2px;
    border-bottom-width: 2px;
  }

  .pbtn.dark {
    background: #d6d6d6;
    color: #111;
  }

  .box {
    display: block;
    width: 12px;
    height: 12px;
    margin: 3px 0 0 2px;
    border: 1px solid #333;
    background: #fff;
  }

  .phdr {
    height: 20px;
    background: #dadada;
    display: flex;
    justify-content: space-between;
    line-height: 20px;
    box-sizing: border-box;
    width: 190px;
    padding-right: 5px;
  }

  .phdr b {
    font: 700 11px/22px "DejaVu Sans", sans-serif;
  }

  .pbar {
    width: 15px;
    margin-left: 1px;
    display: flex;
    flex-direction: column;
    align-items: stretch;
    flex-shrink: 0;
  }

  .arrow {
    height: 20px;
    flex-shrink: 0;
    display: flex;
    align-items: center;
    justify-content: center;
  }

  .chev.up {
    transform: rotate(180deg);
  }

  .chev.left {
    transform: rotate(90deg);
  }

  .chev.right {
    transform: rotate(-90deg);
  }

  .ptrack {
    flex: 1;
    padding-top: 52px;
  }

  .pthumb {
    height: 199px;
    background: #a8a8a8;
  }

  .applyrow {
    margin-top: 2px;
    display: flex;
    justify-content: flex-end;
    padding-right: 3px;
  }

  .apply {
    width: 73px;
    height: 18px;
    background: #c8c8c8;
    color: #8c8c8c;
    text-align: center;
    line-height: 18px;
  }

  .split {
    width: 3px;
    flex-shrink: 0;
    background: #d0d0d0;
    border-right: 1px solid #fff;
  }

  .split.right {
    width: 2px;
    background: #cfcfcf;
    border: 0;
    border-left: 1px solid #e6e6e6;
  }

  .viewarea {
    width: 977px;
    flex-shrink: 0;
    display: flex;
    flex-direction: column;
  }

  .doctabs {
    height: 20px;
    flex-shrink: 0;
    display: flex;
    background: #c8c8c8;
    position: relative;
    margin-left: -1px;
  }

  .dtab {
    width: 128px;
    flex-shrink: 0;
    box-sizing: border-box;
    padding-left: 5px;
    display: flex;
    align-items: center;
    gap: 7px;
    color: #555;
  }

  .dtab.on {
    background: #fff;
    color: #222;
    position: relative;
  }

  .dx {
    position: absolute;
    right: 2px;
    top: 1px;
    font: 700 15px "DejaVu Sans", sans-serif;
  }

  .dmenu {
    margin-left: auto;
    width: 22px;
    display: flex;
    flex-direction: column;
    align-items: center;
    justify-content: center;
    gap: 2px;
    padding-right: 1px;
  }

  .bar {
    display: block;
    width: 8px;
    height: 1px;
    background: #444;
  }

  .viewmid {
    flex: 1;
    display: flex;
    min-height: 0;
  }

  .canvas {
    width: 958px;
    background: #fff;
    position: relative;
    overflow: hidden;
    flex-shrink: 0;
  }

  .drawing {
    display: block;
  }

  .logo {
    position: absolute;
    left: 0;
    top: 2px;
    display: flex;
    font: 900 40px/40px "Noto Sans CJK SC", sans-serif;
  }

  .lg-a {
    display: block;
    width: 11px;
    color: #f5bd10;
    -webkit-text-stroke: 2px #f5bd10;
    transform: scaleX(0.7);
    transform-origin: left center;
  }

  .lg-b {
    display: block;
    width: 24px;
    color: #e0702a;
    -webkit-text-stroke: 2px #e0702a;
    transform: scaleX(0.6);
    transform-origin: left center;
  }

  .navbar {
    position: absolute;
    left: 923px;
    top: 2px;
    width: 33px;
    height: 116px;
    box-sizing: border-box;
    background: rgba(240, 240, 240, 0.72);
    border: 2px solid rgba(150, 150, 150, 0.8);
    border-radius: 6px;
    display: flex;
    flex-direction: column;
    align-items: center;
    padding-top: 17px;
  }

  .navclose {
    position: absolute;
    right: 1px;
    top: -1px;
    font: 700 10px "DejaVu Sans", sans-serif;
    color: #aaa;
  }

  .navbar .tri {
    margin: 2px 0;
  }

  .navline {
    display: block;
    width: 24px;
    height: 1px;
    background: #bbb;
    margin: 3px 0 6px;
  }

  .navbar svg + .tri + .navline + svg + .tri {
    margin-top: 14px;
  }

  .navgear {
    position: absolute;
    right: 2px;
    bottom: 2px;
    width: 6px;
    height: 6px;
    border-radius: 50%;
    background: #bbb;
  }

  .vscroll {
    width: 19px;
    flex-shrink: 0;
    display: flex;
    flex-direction: column;
    background: #efefef;
    padding-right: 3px;
    box-sizing: border-box;
  }

  .vtrack {
    flex: 1;
    padding-top: 219px;
  }

  .vthumb {
    height: 17px;
    background: #ccc;
  }

  .viewbar {
    height: 17px;
    flex-shrink: 0;
    margin-bottom: 1px;
    display: flex;
    align-items: center;
    background: #efefef;
    font-size: 11px;
  }

  .scale {
    width: 78px;
    padding-left: 23px;
    box-sizing: border-box;
    white-space: pre;
    word-spacing: 3px;
    flex-shrink: 0;
    color: #222;
  }

  .vicons {
    display: flex;
    align-items: center;
    flex-shrink: 0;
    width: 247px;
  }

  .vi {
    width: 20.700px;
    flex-shrink: 0;
    display: flex;
    justify-content: center;
  }

  .htrack {
    flex: 1;
    height: 15px;
    padding-left: 300px;
    box-sizing: border-box;
  }

  .hthumb {
    width: 18px;
    height: 15px;
    background: #c8c8c8;
  }

  .harrow {
    width: 18px;
    display: flex;
    justify-content: center;
    flex-shrink: 0;
  }

  .grip {
    width: 17px;
    flex-shrink: 0;
  }

  .browser {
    flex: 1;
    min-width: 0;
    display: flex;
    flex-direction: column;
    background: #fff;
  }

  .bhead {
    height: 20px;
    line-height: 20px;
    padding-left: 2px;
    background: #efefef;
    white-space: nowrap;
    overflow: hidden;
    flex-shrink: 0;
  }

  .tree {
    flex: 1;
    position: relative;
    overflow: hidden;
  }

  .guides {
    position: absolute;
    left: 0;
    top: 0;
  }

  .trow {
    height: 20px;
    display: flex;
    align-items: center;
    white-space: nowrap;
    position: relative;
    color: #222;
  }

  .trow.lv0 {
    padding-left: 5px;
  }

  .trow.lv1 {
    padding-left: 25px;
  }

  .trow.lv2 {
    padding-left: 63px;
  }

  .tbox {
    width: 9px;
    height: 9px;
    flex-shrink: 0;
    box-sizing: border-box;
    border: 1px solid #999;
    background: #fff;
    font: 10px/7px "DejaVu Sans Mono", monospace;
    text-align: center;
    color: #333;
  }

  .tbox.none {
    visibility: hidden;
  }

  .ticon {
    margin-left: 6px;
    background: #fff;
  }

  .lv0 .ttext {
    margin-left: 6px;
  }

  .lv1 .ttext {
    margin-left: 12px;
  }

  .lv2 .ttext {
    padding: 1px 3px;
    background: #fff;
  }

  .ttext.sel,
  .lv2 .ttext.sel {
    background: #1a6fb8;
    color: #fff;
  }

  .bscroll {
    height: 18px;
    flex-shrink: 0;
    display: flex;
    align-items: center;
    background: #efefef;
  }

  .bscroll .harrow {
    width: 18px;
  }

  .bthumb {
    flex: 1;
    height: 16px;
    background: #c8c8c8;
  }

  /* status */
  .status {
    height: 24px;
    flex-shrink: 0;
    display: flex;
    align-items: center;
    background: #c6c6c6;
  }

  .st-ws {
    margin-left: 325px;
  }

  .combo {
    margin-left: 8px;
    width: 204px;
    height: 18px;
    background: #fff;
    display: flex;
    justify-content: flex-end;
    align-items: center;
    padding-right: 5px;
    box-sizing: border-box;
  }

  .combo.model {
    margin-left: 10px;
    justify-content: space-between;
    padding-left: 2px;
    color: #777;
  }

  .st-f {
    margin-left: 9px;
  }

  .st-n {
    margin-left: -2px;
    color: #222;
  }

  .st-l {
    margin-left: 26px;
  }

  .st-o {
    margin-left: 11px;
  }

  .st-right {
    margin-left: auto;
    display: flex;
    align-items: center;
    gap: 10px;
    margin-right: -4px;
  }

  .st-z {
    margin-left: -8px;
    color: #222;
    width: 10px;
  }

  /* taskbar */
  .taskbar {
    height: 40px;
    flex: 1;
    display: flex;
    background: #efdfca;
  }

  .ie {
    width: 35px;
    margin-top: 8px;
    margin-left: -1px;
    margin-right: 1px;
  }

  .task {
    display: flex;
    align-items: center;
    box-sizing: border-box;
    border-bottom: 3px solid #1fa287;
    font-size: 12.500px;
    color: #222;
    flex-shrink: 0;
  }

  .task.active {
    width: 160px;
    background: #f4efe5;
    padding-left: 11px;
    gap: 5px;
  }

  .task.folder {
    margin-left: 5px;
    width: 152px;
    padding-left: 10px;
    gap: 10px;
  }

  .tray {
    margin-left: auto;
    display: flex;
    align-items: center;
    gap: 9px;
    margin-right: -15px;
    color: #222;
  }

  .ime {
    font-size: 15px;
    margin-left: -3px;
  }

  .clock {
    margin-left: 10px;
    font-size: 12px;
    line-height: 18px;
    text-align: right;
    width: 54px;
    white-space: nowrap;
  }

  .clock div:first-child {
    padding-right: 15px;
  }

  /* recording cursor */
  .spot {
    position: absolute;
    left: 107px;
    top: 419px;
    width: 60px;
    height: 60px;
    border-radius: 50%;
    background: rgba(90, 90, 90, 0.45);
  }

  .mouse {
    position: absolute;
    left: 137px;
    top: 450px;
  }
</style>
